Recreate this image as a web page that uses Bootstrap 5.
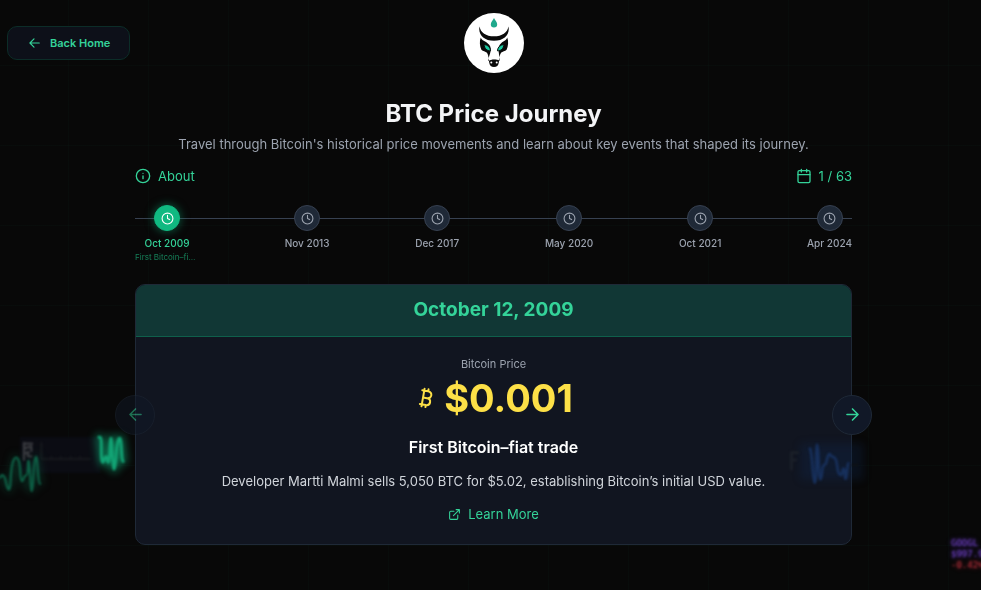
<!DOCTYPE html>
<html lang="en" data-bs-theme="dark">
<head>
<meta charset="utf-8">
<meta name="viewport" content="width=device-width, initial-scale=1">
<title>BTC Price Journey</title>
<link href="https://cdn.jsdelivr.net/npm/bootstrap@5.3.0/dist/css/bootstrap.min.css" rel="stylesheet">
<style>
  body {
    min-height: 100vh;
    background-color: #080808;
    background-image:
      linear-gradient(to right, rgba(16, 185, 129, .025) 1px, transparent 1px),
      linear-gradient(to bottom, rgba(16, 185, 129, .025) 1px, transparent 1px);
    background-size: 80px 80px;
    background-position: 68px 65px;
    font-family: Inter, "Liberation Sans", sans-serif;
    overflow-x: hidden;
  }
  svg { display: block; fill: none; stroke: currentColor; stroke-width: 2; stroke-linecap: round; stroke-linejoin: round; flex: none; }
  .mint { color: #34d399; }
  .backdrop { position: fixed; inset: 0; overflow: hidden; pointer-events: none; }
  .backdrop > * { position: absolute; }
  .wave-left { left: 0; top: 425px; overflow: visible; }
  .wave-right { position: absolute; right: -28px; bottom: 50px; z-index: 2; overflow: visible; pointer-events: none; }
  .soft { filter: blur(3px); }
  .glow { filter: blur(12px); }
  .ticker { left: 951px; top: 538px; font: 400 9px/11px "DejaVu Sans Mono", monospace; color: #6d3fc4; filter: blur(1px); text-shadow: 0 0 4px #5b34a8; white-space: nowrap; }
  .ticker .down { color: #b02d38; text-shadow: 0 0 4px #8a2430; }
  .back-link { position: absolute; left: 7px; top: 26px; height: 34px; padding: 0 19px; gap: 9px; border: 1px solid #0c2d28; border-radius: 10px; background: #0d1019; font-size: 11px; font-weight: 600; }
  .page { padding: 13px 0 45px 6px; position: relative; }
  .journey { max-width: 717px; }
  .logo { width: 60px; height: 60px; stroke: none; }
  .page-title { font-size: 24px; line-height: 32px; font-weight: 700; color: #f3f4f6; margin: 25px 0 0; }
  .subtitle { font-size: 13px; line-height: 20px; color: #9ca3af; margin: 4px 0 12px; }
  .tool { font-size: 13px; line-height: 20px; gap: 7px; }
  .timeline { position: relative; margin-top: 19px; height: 79px; }
  .timeline::before { content: ""; position: absolute; left: 0; right: 0; top: 13px; height: 1px; background: #374151; }
  .stop { position: relative; padding: 0; border: 0; background: none; color: #9ca3af; font-size: 10px; line-height: 14px; font-weight: 500; }
  .dot { width: 26px; height: 26px; border-radius: 50%; background: #1f2937; border: 1px solid #374151; margin-bottom: 5px; }
  .stop.current { color: #34d399; width: 64px; }
  .stop.current .dot { background: #10b981; border-color: #10b981; color: #fff; box-shadow: 0 0 10px rgba(16, 185, 129, .5); }
  .stop-note { font-size: 8px; line-height: 14px; font-weight: 400; color: #168059; width: 64px; }
  .event-wrap { position: relative; }
  .event { border: 1px solid #1f2937; border-radius: 10px; background: #111520; overflow: hidden; }
  .event-head { background: #113735; border-bottom: 1px solid #0f5f4b; font-size: 19px; line-height: 28px; font-weight: 700; padding: 11px 0 12px; margin: 0; }
  .event-body { padding: 19px 16px 20px; }
  .price-label { font-size: 11px; line-height: 16px; color: #9ca3af; }
  .price { font-size: 38px; line-height: 48px; font-weight: 700; color: #fde047; gap: 6px; margin-top: 2px; }
  .event-name { font-size: 16px; line-height: 24px; font-weight: 600; color: #fff; margin: 13px 0 12px; }
  .event-text { font-size: 13px; line-height: 20px; color: #d1d5db; margin: 0 0 13px; }
  .learn { font-size: 13px; line-height: 20px; gap: 7px; }
  .step { position: absolute; top: 50%; width: 40px; height: 40px; margin-top: -20px; padding: 0; border-radius: 50%; border: 1px solid #1f2937; background: #111827; z-index: 3; }
  .step-prev { left: -20px; }
  .step-prev:disabled { opacity: .5; }
  .step-next { right: -20px; }
</style>
</head>
<body>
<svg width="0" height="0" class="position-absolute" aria-hidden="true">
  <symbol id="clock" viewBox="0 0 24 24"><circle cx="12" cy="12" r="10"/><path d="M12 6v6l4 2"/></symbol>
</svg>
<div class="backdrop" aria-hidden="true">
  <svg class="wave-left" width="140" height="75" viewBox="0 0 420 225">
    <rect class="soft" x="60" y="36" width="240" height="108" fill="#0b0c13" stroke="none"/>
    <path class="soft" stroke="#3a3b40" stroke-width="7" d="M72 54v50M72 56h24M74 70l20-6v14M74 84h12M84 80v14h10"/>
    <path class="soft" stroke="#17181d" stroke-width="6" d="M124 54v48h146M154 96v6M182 96v6M212 96v6M240 96v6"/>
    <path class="glow" stroke="#0c4a36" stroke-width="16" opacity=".5" d="M0 155 28 195 45 95 65 165 95 195 108 95 120 175"/>
    <path class="soft" stroke="#0d5f45" stroke-width="7" d="M0 158C6 145 14 150 18 172 24 200 30 204 32 165 34 110 44 88 54 102 64 120 58 166 66 168 72 168 70 150 78 152 86 152 82 104 86 108 90 112 91 196 95 198 102 196 98 102 108 96 114 96 112 174 120 176"/>
    <path class="glow" stroke="#10b981" stroke-width="22" opacity=".55" d="M298 37 308 112 326 112 333 40 343 132 361 40 369 108"/>
    <path class="soft" stroke="#12a374" stroke-width="9" d="M297 37C304 36 304 46 304 66 304 100 305 112 309 112 314 110 312 95 318 95 324 95 320 112 325 112 332 108 328 44 333 40 338 44 336 130 342 132 350 128 346 46 358 40 366 38 362 104 369 109"/>
  </svg>
  <div class="ticker">GOOGL<br>$997.98<br><span class="down">-0.42%</span></div>
</div>

<a href="#" class="back-link mint d-inline-flex align-items-center text-decoration-none">
  <svg width="14" height="14" viewBox="0 0 24 24"><path d="m12 19-7-7 7-7M21 12H5"/></svg>Back Home</a>

<main class="page">
  <div class="journey mx-auto">
    <header class="text-center">
      <svg class="logo mx-auto" viewBox="0 0 60 60" role="img" aria-label="Bull logo">
        <circle cx="30" cy="30" r="30" fill="#fff"/>
        <path fill="#1fa98c" d="M30 5c1.200 2.800 3.200 4 3.200 6.200a3.200 3.200 0 0 1-6.400 0C26.800 9 28.800 7.800 30 5z"/>
        <path fill="#0a0a0a" d="M15.600 13.500C13.800 21 19.500 27.800 30 27.800S46.200 21 44.400 13.500C43.500 19.800 38 23.300 30 23.300S16.500 19.800 15.600 13.500z"/>
        <path id="face" fill="#0a0a0a" d="M16.800 24.500c-1.600 3.500-1 8.800.6 12.300 1.500 1.500 4 1.700 5.600 3 1.800 3 1.500 6 2.200 9.700.4 3 2 4.500 4.800 4.500s4.400-1.500 4.800-4.500c.7-3.700.4-6.700 2.200-9.700 1.600-1.300 4.100-1.500 5.600-3 1.600-3.500 2.200-8.800.6-12.300-.8 3-3.200 3.500-5.600 5.200-1.200 1-2.700 2.800-3 5.300-.3 5 1.300 9.500 1.200 13l-1.800-1.200c-1.200-.6-5.600-.6-6.800 0L24.200 48c-.1-3.500 2.900-8 2.500-13-.3-2.500-2.500-4.300-3.700-5.300-2.400-1.700-5.400-2.200-6.200-5.200z"/>
        <path fill="#fff" d="M20.800 28.800c5 .7 6 2 7 5.200.8 4-1.400 9-1.700 13 1-.9 6.800-.9 7.800 0-.3-4-2.500-9-1.700-13 1-3.200 2-4.500 7-5.200z"/>
        <path fill="#19c9a0" stroke="#0a0a0a" stroke-width="1" d="M20 31.500c3.500.3 6.200 2.200 6.600 6.300-3.600.2-6.200-2-6.600-6.300zM40 31.500c-3.500.3-6.200 2.200-6.600 6.300 3.600.2 6.200-2 6.600-6.300z"/>
        <circle cx="27.300" cy="49.500" r="1" fill="#fff"/><circle cx="32.700" cy="49.500" r="1" fill="#fff"/>
      </svg>
      <h1 class="page-title">BTC Price Journey</h1>
      <p class="subtitle">Travel through Bitcoin's historical price movements and learn about key events that shaped its journey.</p>
    </header>
    <div class="d-flex justify-content-between">
      <a href="#" class="tool mint d-flex align-items-center text-decoration-none"><svg width="16" height="16" viewBox="0 0 24 24"><circle cx="12" cy="12" r="10"/><path d="M12 16v-4M12 8h.01"/></svg>About</a>
      <div class="tool mint d-flex align-items-center"><svg width="16" height="16" viewBox="0 0 24 24"><path d="M8 2v4M16 2v4M3 10h18"/><rect x="3" y="4" width="18" height="18" rx="2"/></svg>1 / 63</div>
    </div>
    <nav class="timeline d-flex justify-content-between align-items-start" aria-label="Timeline">
      <button class="stop current d-flex flex-column align-items-center" type="button"><span class="dot d-flex align-items-center justify-content-center"><svg width="13" height="13"><use href="#clock"/></svg></span>Oct 2009<span class="stop-note text-truncate">First Bitcoin–fiat trade</span></button>
      <button class="stop d-flex flex-column align-items-center" type="button"><span class="dot d-flex align-items-center justify-content-center"><svg width="13" height="13"><use href="#clock"/></svg></span>Nov 2013</button>
      <button class="stop d-flex flex-column align-items-center" type="button"><span class="dot d-flex align-items-center justify-content-center"><svg width="13" height="13"><use href="#clock"/></svg></span>Dec 2017</button>
      <button class="stop d-flex flex-column align-items-center" type="button"><span class="dot d-flex align-items-center justify-content-center"><svg width="13" height="13"><use href="#clock"/></svg></span>May 2020</button>
      <button class="stop d-flex flex-column align-items-center" type="button"><span class="dot d-flex align-items-center justify-content-center"><svg width="13" height="13"><use href="#clock"/></svg></span>Oct 2021</button>
      <button class="stop d-flex flex-column align-items-center" type="button"><span class="dot d-flex align-items-center justify-content-center"><svg width="13" height="13"><use href="#clock"/></svg></span>Apr 2024</button>
    </nav>
    <section class="event-wrap">
      <article class="event text-center">
        <h2 class="event-head mint">October 12, 2009</h2>
        <div class="event-body">
          <div class="price-label">Bitcoin Price</div>
          <div class="price d-flex justify-content-center align-items-center"><svg width="24" height="24" viewBox="0 0 24 24"><path d="M11.767 19.089c4.924.868 6.14-6.025 1.216-6.894m-1.216 6.894L5.86 18.047m5.908 1.042-.347 1.97m1.563-8.864c4.924.869 6.14-6.025 1.215-6.893m-1.215 6.893-3.94-.694m5.155-6.2L8.29 4.26m5.908 1.042.348-1.97M7.48 20.364l3.126-17.727"/></svg>$0.001</div>
          <h3 class="event-name">First Bitcoin–fiat trade</h3>
          <p class="event-text">Developer Martti Malmi sells 5,050 BTC for $5.02, establishing Bitcoin’s initial USD value.</p>
          <div class="d-flex justify-content-center">
            <a href="#" class="learn mint d-flex align-items-center text-decoration-none"><svg width="13" height="13" viewBox="0 0 24 24"><path d="M15 3h6v6M10 14 21 3M18 13v6a2 2 0 0 1-2 2H5a2 2 0 0 1-2-2V8a2 2 0 0 1 2-2h6"/></svg>Learn More</a>
          </div>
        </div>
      </article>
      <svg class="wave-right" width="100" height="65" viewBox="0 0 300 195" aria-hidden="true">
        <rect class="glow" x="60" y="40" width="190" height="110" fill="#10284f" stroke="none" opacity=".3"/>
        <path class="soft" stroke="#1b2029" stroke-width="8" d="M34 118V68h20M36 90h12"/>
        <path class="soft" stroke="#17305c" stroke-width="8" d="M90 56C98 70 98 156 104 158 112 156 106 46 111 44 118 46 114 146 121 148 128 146 124 112 131 106 144 104 138 76 149 72 154 84 164 76 168 90 174 112 172 134 182 135 190 132 186 114 191 116 197 120 192 146 197 146 202 144 200 110 205 100"/>
        <path class="soft" stroke="#101114" stroke-width="6" d="M218 105h14"/>
      </svg>
      <button class="step step-prev mint d-flex align-items-center justify-content-center" type="button" disabled aria-label="Previous"><svg width="19" height="19" viewBox="0 0 24 24"><path d="m12 19-7-7 7-7M19 12H5"/></svg></button>
      <button class="step step-next mint d-flex align-items-center justify-content-center" type="button" aria-label="Next"><svg width="19" height="19" viewBox="0 0 24 24"><path d="M5 12h14M12 5l7 7-7 7"/></svg></button>
    </section>
  </div>
</main>
<script src="https://cdn.jsdelivr.net/npm/bootstrap@5.3.0/dist/js/bootstrap.bundle.min.js"></script>
</body>
</html>
